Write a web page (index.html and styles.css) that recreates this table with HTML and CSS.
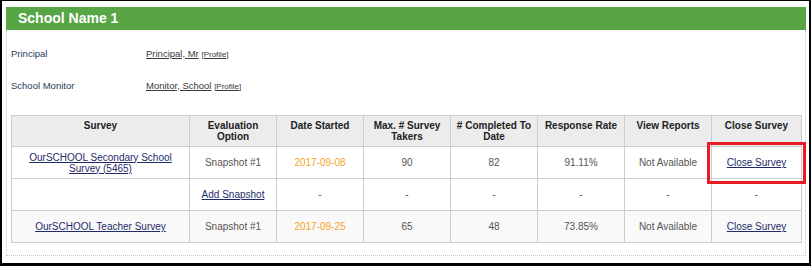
FILE: index.html
```html
<!DOCTYPE html>
<html lang="en">
<head>
    <meta charset="UTF-8">
    <meta name="viewport" content="width=device-width, initial-scale=1.0">
    <title>School Surveys</title>
    <link rel="stylesheet" href="styles.css">
</head>
<body>
    <div class="frame">
        <div class="school">
            <h2 class="school-title">School Name 1</h2>

            <div class="school-body">
                <div class="staff">
                    <div class="staff-label">Principal</div>
                    <div class="staff-value"><a href="#">Principal, Mr</a> <a href="#" class="profile">[Profile]</a></div>

                    <div class="staff-label">School Monitor</div>
                    <div class="staff-value"><a href="#">Monitor, School</a> <a href="#" class="profile">[Profile]</a></div>
                </div>

                <table class="surveys">
                    <colgroup>
                        <col class="col-survey">
                        <col class="col-std" span="6">
                        <col class="col-close">
                    </colgroup>
                    <thead>
                        <tr>
                            <th>Survey</th>
                            <th>Evaluation Option</th>
                            <th>Date Started</th>
                            <th>Max. # Survey Takers</th>
                            <th># Completed To Date</th>
                            <th>Response Rate</th>
                            <th>View Reports</th>
                            <th>Close Survey</th>
                        </tr>
                    </thead>
                    <tbody>
                        <tr>
                            <td><a href="#">OurSCHOOL Secondary School Survey (5465)</a></td>
                            <td>Snapshot #1</td>
                            <td class="date">2017-09-08</td>
                            <td>90</td>
                            <td>82</td>
                            <td>91.11%</td>
                            <td>Not Available</td>
                            <td class="marked"><a href="#">Close Survey</a><span class="callout"></span></td>
                        </tr>
                        <tr>
                            <td></td>
                            <td><a href="#">Add Snapshot</a></td>
                            <td>-</td>
                            <td>-</td>
                            <td>-</td>
                            <td>-</td>
                            <td>-</td>
                            <td>-</td>
                        </tr>
                        <tr class="alt">
                            <td><a href="#">OurSCHOOL Teacher Survey</a></td>
                            <td>Snapshot #1</td>
                            <td class="date">2017-09-25</td>
                            <td>65</td>
                            <td>48</td>
                            <td>73.85%</td>
                            <td>Not Available</td>
                            <td><a href="#">Close Survey</a></td>
                        </tr>
                    </tbody>
                </table>
            </div>
        </div>
    </div>
</body>
</html>
```

FILE: styles.css
```css
:root {
    --green: #58a546;
    --link: #1e2b6b;
    --text: #555555;
    --head-text: #222222;
    --line: #cccccc;
    --date: #f7a31c;
}

* {
    box-sizing: border-box;
}

body {
    margin: 0;
    font-family: "Liberation Sans", Arial, sans-serif;
    background: #ffffff;
    color: var(--text);
}

a {
    color: var(--link);
    text-decoration: underline;
}

.frame {
    width: 811px;
    height: 266px;
    border-style: solid;
    border-color: #000000;
    border-width: 1px 2px 3px 2px;
    padding: 6px 3px 0 4px;
}

.school-title {
    margin: 0;
    height: 23px;
    line-height: 23px;
    padding-left: 12px;
    background-color: var(--green);
    color: #ffffff;
    font-size: 14px;
    font-weight: bold;
}

.school-body {
    border: 1px dotted #c4c4c4;
    border-top: none;
    padding: 7px 3px 12px 4px;
}

/* principal / monitor rows */
.staff {
    display: grid;
    grid-template-columns: 135px 1fr;
    grid-auto-rows: 32px;
    align-items: center;
    font-size: 9.5px;
    margin-bottom: 14px;
    color: #2a3a5a;
}

.staff-value a {
    color: #3a3a3a;
}

.staff .profile {
    font-size: 8px;
}

/* survey table */
.surveys {
    width: 791px;
    border-collapse: collapse;
    table-layout: fixed;
    font-size: 10px;
    line-height: 11px;
}

.col-survey {
    width: 178px;
}

.col-std {
    width: 87px;
}

.col-close {
    width: 90px;
}

.surveys th,
.surveys td {
    border: 1px solid var(--line);
    text-align: center;
    padding: 0 6px;
}

.surveys th {
    height: 31px;
    padding: 4px 3px 0;
    vertical-align: top;
    background-color: #ececec;
    color: var(--head-text);
    font-weight: bold;
}

.surveys td {
    height: 32px;
    vertical-align: middle;
}

.surveys tr.alt td {
    background-color: #f9f9f9;
}

.surveys .date {
    color: var(--date);
}

/* highlight box drawn round a cell */
.surveys .marked {
    position: relative;
}

.callout {
    position: absolute;
    top: -5px;
    left: -5px;
    right: -5px;
    bottom: -6px;
    border: 3px solid #e81a24;
    pointer-events: none;
}
```
